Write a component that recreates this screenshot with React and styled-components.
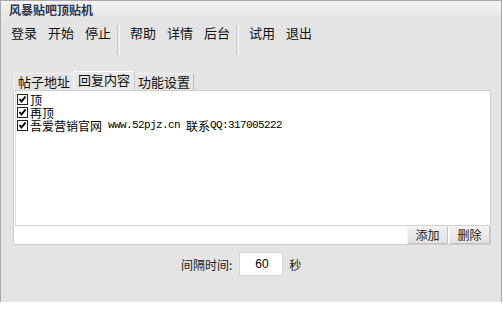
import { useState } from "react";
import styled, { createGlobalStyle } from "styled-components";

const GlobalStyle = createGlobalStyle`
  body {
    margin: 0;
    background: #fff;
    font-family: "Noto Sans CJK SC", "Liberation Sans", sans-serif;
  }
`

const Window = styled.div`
  width: 502px;
  height: 302px;
  box-sizing: border-box;
  border-top: 1px solid #a9a9a9;
  border-left: 1px solid #a9a9a9;
  border-right: 1px solid #a9a9a9;
  background: #e4e4e4;
  display: flex;
  flex-direction: column;
`
const TitleBar = styled.div`
  height: 19px;
  padding-left: 8px;
  background: linear-gradient(#f3f3f3, #e4e4e4);
  font-size: 12px;
  font-weight: bold;
  line-height: 18px;
  color: #2b3550;
`
const Toolbar = styled.div`
  height: 36px;
  display: flex;
  align-items: flex-start;
  padding: 5px 0 0 10px;
  box-sizing: border-box;
  margin-bottom: 14px;
`
const ToolItem = styled.span`
  font-size: 13px;
  line-height: 16px;
  color: #111;
  margin-right: ${(p) => (p.$last ? "6px" : "11px")};
  cursor: default;
`
const Separator = styled.span`
  width: 1px;
  height: 30px;
  margin: 0 10px 0 0;
  border-left: 1px solid #cdcdcd;
  border-right: 1px solid #f6f6f6;
`
const TabBox = styled.div`
  margin-left: 12px;
  width: 478px;
`
const TabRow = styled.div`
  display: flex;
  align-items: flex-end;
  height: 20px;
  padding-left: 1px;
`
const Tab = styled.div`
  height: ${(p) => (p.$active ? "19px" : "17px")};
  padding: 0 ${(p) => (p.$active ? "4px" : "3px")};
  margin: 0 ${(p) => (p.$active ? "-1px" : "0")};
  box-sizing: border-box;
  border: 1px solid ${(p) => (p.$active ? "#fbfbfb" : "#f2f2f2")};
  border-right-color: ${(p) => (p.$active ? "#c8c8c8" : "#bdbdbd")};
  border-bottom: none;
  background: ${(p) => (p.$active ? "#e9e9e9" : "#e4e4e4")};
  font-size: 13px;
  line-height: 16px;
  color: #111;
  z-index: ${(p) => (p.$active ? 1 : 0)};
`
const Panel = styled.div`
  height: 155px;
  box-sizing: border-box;
  border: 1px solid #cfcfcf;
  background: #fff;
  display: flex;
  flex-direction: column;
`
const List = styled.div`
  flex: 1;
  margin-left: 1px;
  border-left: 1px solid #dedede;
  border-bottom: 1px solid #d2d2d2;
  padding: 2px 0 0 1px;
`
const Row = styled.label`
  display: flex;
  align-items: center;
  height: 13px;
  font-size: 12px;
  line-height: 13px;
  color: #000;
  white-space: nowrap;
`
const Box = styled.span`
  width: 9px;
  height: 9px;
  border: 1px solid #222;
  background: #fff;
  margin-right: 2px;
  display: flex;
  align-items: center;
  justify-content: center;
`
const Mono = styled.span`
  font-family: "Liberation Mono", monospace;
  font-size: 11px;
  letter-spacing: -0.6px;
  white-space: pre;
`
const InputRow = styled.div`
  height: 18px;
  display: flex;
  justify-content: flex-end;
`
const Button = styled.button`
  width: 41px;
  height: 18px;
  margin-left: 1px;
  padding: 0;
  border: 1px solid #c2c2c2;
  border-top-color: #f4f4f4;
  border-left-color: #f4f4f4;
  background: linear-gradient(#f1f1f1, #e2e2e2);
  font-family: "Noto Sans CJK SC", sans-serif;
  font-size: 12px;
  line-height: 16px;
  color: #222;
`
const Bottom = styled.div`
  display: flex;
  align-items: center;
  padding: 7px 0 0 180px;
  font-size: 12px;
  color: #222;
`
const NumberInput = styled.input`
  width: 44px;
  height: 24px;
  box-sizing: border-box;
  margin: 0 6px 0 7px;
  border: 1px solid #d8d8d8;
  padding: 0 0 0 15px;
  font-family: "Liberation Sans", sans-serif;
  font-size: 12px;
  color: #000;
  outline: none;
`

const Check = () => (
  <svg width="9" height="9" viewBox="0 0 9 9">
    <path d="M1.5 4 L3.5 6.5 L7.5 1.5" stroke="#000" strokeWidth="2" fill="none" />
  </svg>
)

const tools = [["登录", "开始", "停止"], ["帮助", "详情", "后台"], ["试用", "退出"]];
const tabs = ["帖子地址", "回复内容", "功能设置"];

export default function App() {
  const [active, setActive] = useState(1);
  const [interval, setInterval_] = useState("60");

  return (
    <Window>
      <GlobalStyle />
      <TitleBar>风暴贴吧顶贴机</TitleBar>
      <Toolbar>
        {tools.map((group, gi) => (
          <span key={gi} style={{ display: "contents" }}>
            {group.map((t, i) => (
              <ToolItem key={t} $last={i === group.length - 1}>{t}</ToolItem>
            ))}
            {gi < tools.length - 1 && <Separator />}
          </span>
        ))}
      </Toolbar>
      <TabBox>
        <TabRow>
          {tabs.map((t, i) => (
            <Tab key={t} $active={i === active} onClick={() => setActive(i)}>{t}</Tab>
          ))}
        </TabRow>
        <Panel>
          <List>
            <Row><Box><Check /></Box>顶</Row>
            <Row><Box><Check /></Box>再顶</Row>
            <Row>
              <Box><Check /></Box>吾爱营销官网<Mono> www.52pjz.cn </Mono>联系<Mono>QQ:317005222</Mono>
            </Row>
          </List>
          <InputRow>
            <Button>添加</Button>
            <Button>删除</Button>
          </InputRow>
        </Panel>
      </TabBox>
      <Bottom>
        间隔时间:
        <NumberInput value={interval} onChange={(e) => setInterval_(e.target.value)} />
        秒
      </Bottom>
    </Window>
  );
}
